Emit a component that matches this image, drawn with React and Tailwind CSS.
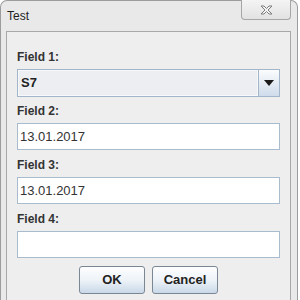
import React from "react";

const FONT = "font-['Liberation_Sans',Arial,sans-serif]";

function CloseGlyph() {
    return (
        <svg width="13" height="10" viewBox="0 0 13 10">
            <path
                d="M1 1 L4 1 L6.5 3.5 L9 1 L12 1 L8 5 L12 9 L9 9 L6.5 6.5 L4 9 L1 9 L5 5 Z"
                fill="#f4f4f4"
                stroke="#7d7d7d"
                strokeWidth="1"
                strokeLinejoin="round"
            />
        </svg>
    );
}

function Label({children}) {
    return (
        <div className="h-[14px] leading-[14px] text-[12px] font-bold text-[#333333] mb-[5px]">
            {children}
        </div>
    );
}

function TextField({value}) {
    return (
        <div className="h-[27px] border border-[#a9bccd] bg-white flex items-center pl-[2px] text-[13px] text-[#333333] mb-[8px]">
            {value}
        </div>
    );
}

function Combo({value}) {
    return (
        <div className="h-[28px] border border-[#a3b6c9] bg-[#eceef1] flex mb-[7px]">
            <div className="flex-1 flex items-center pl-[2px] text-[13px] font-bold text-[#222222] border border-[#f6f8fa]">
                {value}
            </div>
            <div className="w-[21px] border-l border-[#a3b6c9] bg-gradient-to-b from-[#fbfcfd] to-[#cfdceb] flex items-center justify-center">
                <svg width="10" height="6" viewBox="0 0 10 6">
                    <path d="M0 0 L10 0 L5 6 Z" fill="#1a1a1a" />
                </svg>
            </div>
        </div>
    );
}

function DialogButton({children}) {
    return (
        <button className="w-[66px] h-[28px] rounded-[3px] border border-[#7a8896] bg-gradient-to-b from-[#fdfeff] via-[#eef3f8] to-[#c9d8e8] text-[13px] font-bold text-[#222222]">
            {children}
        </button>
    );
}

export default function App() {
    return (
        <div className={`w-[300px] h-[300px] bg-white overflow-hidden ${FONT}`}>
            <div className="w-[298px] h-[300px] rounded-t-[7px] border border-b-0 border-[#9c9c9c] bg-[#e9e9e9] pl-[5px] pr-[6px] flex flex-col">
                <div className="h-[30px] flex items-start justify-between">
                    <span className="mt-[8px] ml-[1px] text-[12px] leading-[14px] text-[#1e1e1e]">Test</span>
                    <div className="w-[50px] h-[20px] -mt-px border border-t-0 border-[#a6a6a6] rounded-b-[4px] bg-gradient-to-b from-[#f4f4f4] to-[#e2e2e2] flex items-center justify-center">
                        <CloseGlyph />
                    </div>
                </div>
                <div className="flex-1 border border-b-0 border-[#a8a8a8] bg-[#eeeeee] px-[10px] pt-[18px]">
                    <Label>Field 1:</Label>
                    <Combo value="S7" />
                    <Label>Field 2:</Label>
                    <TextField value="13.01.2017" />
                    <Label>Field 3:</Label>
                    <TextField value="13.01.2017" />
                    <Label>Field 4:</Label>
                    <TextField value="" />
                    <div className="flex justify-center gap-[7px] mt-[3px]">
                        <DialogButton>OK</DialogButton>
                        <DialogButton>Cancel</DialogButton>
                    </div>
                </div>
            </div>
        </div>
    );
}
